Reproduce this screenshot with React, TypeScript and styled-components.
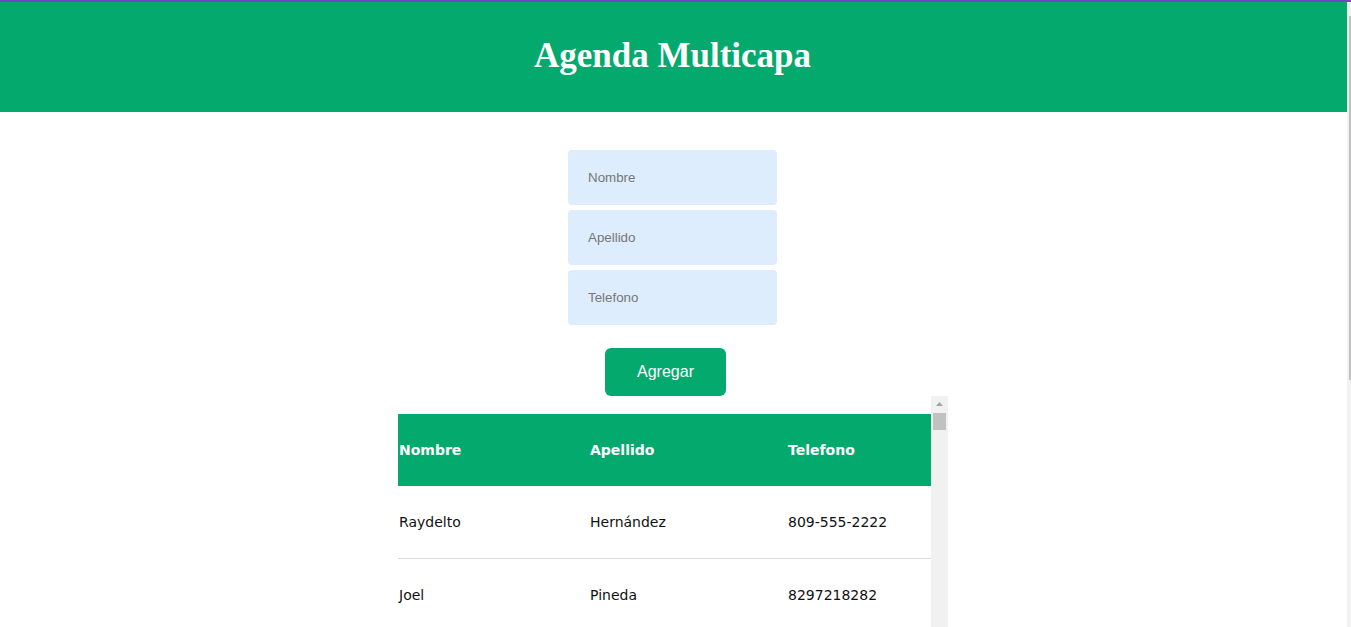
import React from "react";
import styled, { createGlobalStyle } from "styled-components";

const GlobalStyle = createGlobalStyle`
  html, body {
    overflow: hidden;
  }
  body {
    margin: 0;
    border-top: 2px solid #7049c2;
    background: #ffffff;
    font-family: "DejaVu Sans", sans-serif;
  }
`;

const Frame = styled.div`
  display: flex;
  height: calc(100vh - 2px);
  overflow: hidden;
`;

const Main = styled.div`
  flex: 1;
  min-width: 0;
  display: flex;
  flex-direction: column;
  align-items: center;
`;

const PageTrack = styled.div`
  width: 4px;
  background: #f1f1f1;
  display: flex;
  flex-direction: column;
  padding-top: 14px;
  box-sizing: border-box;
`;

const PageThumb = styled.div`
  width: 2px;
  height: 364px;
  margin-left: 2px;
  background: #c1c1c1;
`;

const Header = styled.header`
  align-self: stretch;
  flex: none;
  height: 110px;
  background: #04a96d;
  display: flex;
  align-items: center;
  justify-content: center;
`;

const Title = styled.h1`
  margin: 0 2px 0 0;
  color: #ffffff;
  font-family: "Liberation Serif", serif;
  font-weight: 700;
  font-size: 35px;
  transform: translateY(-1px);
`;

const Form = styled.form`
  display: flex;
  flex-direction: column;
  align-items: center;
  margin-top: 38px;
  flex: none;
`;

const Fields = styled.div`
  display: flex;
  flex-direction: column;
  gap: 5px;
  margin-right: 2px;
`;

const Input = styled.input`
  box-sizing: border-box;
  width: 209px;
  height: 55px;
  border: none;
  border-radius: 4px;
  background: #ddedfd;
  padding: 0 20px;
  font-family: "Liberation Sans", Arial, sans-serif;
  font-size: 13.3333px;
  color: #333;
  outline: none;
  &::placeholder {
    color: #777777;
  }
`;

const Button = styled.button`
  margin-top: 23px;
  margin-right: 16px;
  width: 121px;
  height: 48px;
  border: none;
  border-radius: 6px;
  background: #04a96d;
  color: #ffffff;
  font-family: "Liberation Sans", Arial, sans-serif;
  font-size: 16px;
  cursor: pointer;
`;

const TableBox = styled.div`
  flex: 1;
  min-height: 0;
  width: 550px;
  margin-right: 1px;
  display: flex;
`;

const TableArea = styled.div`
  flex: 1;
  min-width: 0;
  padding-top: 18px;
  overflow: hidden;
`;

const ScrollTrack = styled.div`
  width: 17px;
  flex: none;
  background: #f1f1f1;
  display: flex;
  flex-direction: column;
  align-items: center;
  padding-top: 6px;
  box-sizing: border-box;
`;

const ScrollThumb = styled.div`
  width: 13px;
  height: 17px;
  margin-top: 7px;
  background: #c1c1c1;
`;

const Table = styled.table`
  width: 100%;
  border-collapse: collapse;
  table-layout: fixed;
  font-size: 14px;
`;

const HeadCell = styled.th<{ $w?: number }>`
  box-sizing: border-box;
  background: #04a96d;
  color: #ffffff;
  font-weight: 700;
  text-align: left;
  height: 72px;
  padding: 0 1px;
  width: ${(p) => (p.$w ? `${p.$w}px` : "auto")};
`;

const Row = styled.tr`
  border-top: 1px solid #dddddd;
  &:first-child {
    border-top: none;
  }
`;

const Cell = styled.td`
  height: 72px;
  padding: 0 1px;
  color: #111111;
`;

const contacts = [
  { nombre: "Raydelto", apellido: "Hernández", telefono: "809-555-2222" },
  { nombre: "Joel", apellido: "Pineda", telefono: "8297218282" },
];

export default function App() {
  return (
    <>
      <GlobalStyle />
      <Frame>
        <Main>
          <Header>
            <Title>Agenda Multicapa</Title>
          </Header>
          <Form onSubmit={(e) => e.preventDefault()}>
            <Fields>
              <Input placeholder="Nombre" />
              <Input placeholder="Apellido" />
              <Input placeholder="Telefono" />
            </Fields>
            <Button type="submit">Agregar</Button>
          </Form>
          <TableBox>
            <TableArea>
              <Table>
                <thead>
                  <tr>
                    <HeadCell $w={191}>Nombre</HeadCell>
                    <HeadCell $w={198}>Apellido</HeadCell>
                    <HeadCell>Telefono</HeadCell>
                  </tr>
                </thead>
                <tbody>
                  {contacts.map((c, i) => (
                    <Row key={i}>
                      <Cell>{c.nombre}</Cell>
                      <Cell>{c.apellido}</Cell>
                      <Cell>{c.telefono}</Cell>
                    </Row>
                  ))}
                </tbody>
              </Table>
            </TableArea>
            <ScrollTrack>
              <svg width="7" height="4" viewBox="0 0 7 4">
                <polygon points="3.5,0 7,4 0,4" fill="#a3a3a3" />
              </svg>
              <ScrollThumb />
            </ScrollTrack>
          </TableBox>
        </Main>
        <PageTrack>
          <PageThumb />
        </PageTrack>
      </Frame>
    </>
  );
}
